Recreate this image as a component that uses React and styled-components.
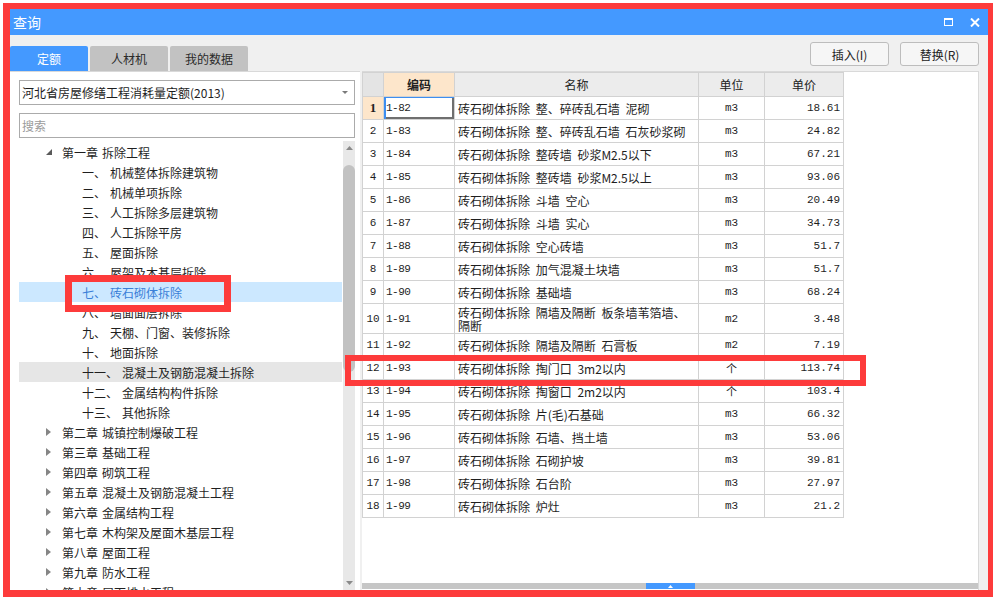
import React from 'react';
import styled, { createGlobalStyle } from 'styled-components';

const GlobalStyle = createGlobalStyle`
  html, body { margin: 0; padding: 0; background: #ffffff; overflow: hidden; }
  body { font-family: "Noto Sans CJK SC", "Noto Sans", sans-serif; }
  * { box-sizing: border-box; }
`;

const CJK = `"Noto Sans CJK SC", "Noto Sans", sans-serif`;
const MONO = `"Liberation Mono", "Noto Sans CJK SC", monospace`;

const Page = styled.div`
  position: relative;
  width: 993px;
  height: 598px;
  padding: 3px 0 0 3px;
  overflow: hidden;
`;

const Frame = styled.div`
  width: 992px;
  height: 594px;
  border: 7px solid #fd3b3b;
  border-top-width: 6px;
  display: flex;
  flex-direction: column;
  background: #f0f0f0;
`;

const TitleBar = styled.div`
  height: 26px;
  flex: none;
  background: #4499ff;
  display: flex;
  align-items: center;
  padding: 0 8px 0 3px;
  color: #ffffff;
  font-family: ${CJK};
  font-size: 14px;
  line-height: 16px;
`;

const TitleText = styled.span`
  margin-top: -1px;
`;

const WinControls = styled.div`
  margin-left: auto;
  display: flex;
  align-items: center;
  gap: 17px;
`;

const Toolbar = styled.div`
  height: 36px;
  flex: none;
  display: flex;
  justify-content: space-between;
  padding-right: 9px;
`;

const Tabs = styled.div`
  align-self: flex-end;
  display: flex;
  gap: 2px;
`;

const Tab = styled.div`
  width: 78px;
  height: 25px;
  display: flex;
  align-items: center;
  justify-content: center;
  border-radius: 2px 2px 0 0;
  font-family: ${CJK};
  font-size: 12px;
  background: ${p => (p.$active ? '#4499ff' : '#c2c2c2')};
  color: ${p => (p.$active ? '#ffffff' : '#2a2a2a')};
`;

const Buttons = styled.div`
  display: flex;
  gap: 11px;
  margin-top: 7px;
`;

const Button = styled.div`
  width: 79px;
  height: 24px;
  border: 1px solid #bdbdbd;
  border-radius: 3px;
  background: #f6f6f6;
  display: flex;
  align-items: center;
  justify-content: center;
  font-family: ${CJK};
  font-size: 12px;
  color: #222;
`;

const Content = styled.div`
  height: 519px;
  flex: none;
  display: flex;
  gap: 2px;
  padding-right: 9px;
`;

const LeftPanel = styled.div`
  width: 350px;
  flex: none;
  background: #ffffff;
  border-top: 1px solid #d9d9d9;
  padding: 8px 5px 0 9px;
  display: flex;
  flex-direction: column;
`;

const Select = styled.div`
  height: 25px;
  flex: none;
  border: 1px solid #ababab;
  padding: 0 6px 0 2px;
  display: flex;
  align-items: center;
  justify-content: space-between;
  font-family: ${CJK};
  font-size: 12px;
  color: #1e1e1e;
`;

const SearchBox = styled.div`
  height: 25px;
  flex: none;
  margin-top: 8px;
  border: 1px solid #ababab;
  padding-left: 2px;
  display: flex;
  align-items: center;
  font-family: ${CJK};
  font-size: 12px;
  color: #9b9b9b;
`;

const TreeWrap = styled.div`
  flex: 1;
  margin-top: 3px;
  display: flex;
  overflow: hidden;
`;

const TreeList = styled.div`
  flex: 1;
  padding-top: 1px;
  overflow: hidden;
`;

const TreeRow = styled.div`
  height: 20px;
  display: flex;
  align-items: center;
  white-space: nowrap;
  padding-left: ${p => (p.$level === 0 ? 27 : 63)}px;
  margin-right: 1px;
  font-family: ${CJK};
  font-size: 12px;
  color: ${p => (p.$selected ? '#3a7fd8' : '#1f1f1f')};
  background: ${p => (p.$selected ? '#cce8ff' : p.$hover ? '#e6e6e6' : 'transparent')};
`;

const Caret = styled.span`
  width: 16px;
  flex: none;
  display: flex;
  align-items: center;
`;

const Prefix = styled.span`
  margin-right: 4px;
`;

const ScrollBar = styled.div`
  width: 12px;
  flex: none;
  background: #e8e8e8;
  display: flex;
  flex-direction: column;
  align-items: center;
`;

const ScrollArrow = styled.div`
  height: 14px;
  width: 12px;
  flex: none;
  display: flex;
  align-items: center;
  justify-content: center;
`;

const Thumb = styled.div`
  width: 12px;
  height: 207px;
  margin-top: 10px;
  border-radius: 6px;
  background: #c2c2c2;
  flex: none;
`;

const Spacer = styled.div`
  flex: 1;
`;

const RightPanel = styled.div`
  flex: 1;
  background: #ffffff;
  border-top: 1px solid #d9d9d9;
  border-right: 1px solid #d9d9d9;
  display: flex;
  flex-direction: column;
`;

const TableArea = styled.div`
  flex: 1;
  overflow: hidden;
`;

const Table = styled.table`
  border-collapse: collapse;
  table-layout: fixed;
  width: 481px;
`;

const HeadCell = styled.th`
  height: 24px;
  padding: 0;
  border: 1px solid #d2d2d2;
  font-family: ${CJK};
  font-size: 12px;
  font-weight: ${p => (p.$hl ? 700 : 400)};
  color: #222;
  text-align: center;
  background: ${p => (p.$hl ? '#fde6cb' : p.$corner ? '#e4e4e4' : '#ececec')};
`;

const Row = styled.tr`
  height: ${p => (p.$tall ? 30 : 23)}px;
`;

const Cell = styled.td`
  padding: 0;
  border: 1px solid #d2d2d2;
  font-size: 12px;
  color: #1e1e1e;
  vertical-align: middle;
  white-space: nowrap;
  overflow: hidden;
`;

const NumCell = styled(Cell)`
  text-align: center;
  font-family: ${p => (p.$hl ? `"Liberation Serif", serif` : MONO)};
  font-size: ${p => (p.$hl ? 13 : 11)}px;
  font-weight: ${p => (p.$hl ? 700 : 400)};
  background: ${p => (p.$hl ? '#fde6cb' : '#ffffff')};
`;

const CodeCell = styled(Cell)`
  padding-left: 2px;
  font-family: ${MONO};
  font-size: 11px;
  letter-spacing: -0.5px;
  box-shadow: ${p => (p.$focus ? 'inset 2px 1px 0 0 #3d8ef0, inset -2px -2px 0 0 #6f6f6f' : 'none')};
`;

const NameCell = styled(Cell)`
  padding-left: 3px;
  font-family: ${CJK};
  word-spacing: 3px;
  line-height: 13px;
  white-space: pre;
`;

const UnitCell = styled(Cell)`
  text-align: center;
  font-family: ${MONO};
  font-size: 11px;
`;

const PriceCell = styled(Cell)`
  text-align: right;
  padding-right: 3px;
  font-family: ${MONO};
  font-size: 11px;
`;

const BottomBar = styled.div`
  height: 6px;
  flex: none;
  margin-bottom: 1px;
  background: #c6c6c6;
  display: flex;
  justify-content: center;
`;

const Handle = styled.div`
  width: 49px;
  height: 6px;
  background: #4499ff;
  display: flex;
  align-items: center;
  justify-content: center;
`;

const Mark = styled.div`
  position: absolute;
  left: ${p => p.$x}px;
  top: ${p => p.$y}px;
  width: ${p => p.$w}px;
  height: ${p => p.$h}px;
  border: ${p => p.$t}px solid #fd3b3b;
  pointer-events: none;
`;

const tree = [
  { level: 0, open: true, prefix: '第一章', text: '拆除工程' },
  { level: 1, prefix: '一、', text: '机械整体拆除建筑物' },
  { level: 1, prefix: '二、', text: '机械单项拆除' },
  { level: 1, prefix: '三、', text: '人工拆除多层建筑物' },
  { level: 1, prefix: '四、', text: '人工拆除平房' },
  { level: 1, prefix: '五、', text: '屋面拆除' },
  { level: 1, prefix: '六、', text: '屋架及木基层拆除' },
  { level: 1, prefix: '七、', text: '砖石砌体拆除', selected: true },
  { level: 1, prefix: '八、', text: '墙面面层拆除' },
  { level: 1, prefix: '九、', text: '天棚、门窗、装修拆除' },
  { level: 1, prefix: '十、', text: '地面拆除' },
  { level: 1, prefix: '十一、', text: '混凝土及钢筋混凝土拆除', hover: true },
  { level: 1, prefix: '十二、', text: '金属结构构件拆除' },
  { level: 1, prefix: '十三、', text: '其他拆除' },
  { level: 0, prefix: '第二章', text: '城镇控制爆破工程' },
  { level: 0, prefix: '第三章', text: '基础工程' },
  { level: 0, prefix: '第四章', text: '砌筑工程' },
  { level: 0, prefix: '第五章', text: '混凝土及钢筋混凝土工程' },
  { level: 0, prefix: '第六章', text: '金属结构工程' },
  { level: 0, prefix: '第七章', text: '木构架及屋面木基层工程' },
  { level: 0, prefix: '第八章', text: '屋面工程' },
  { level: 0, prefix: '第九章', text: '防水工程' },
  { level: 0, prefix: '第十章', text: '屋面排水工程' },
];

const rows = [
  ['1', '1-82', '砖石砌体拆除 整、碎砖乱石墙 泥砌', 'm3', '18.61'],
  ['2', '1-83', '砖石砌体拆除 整、碎砖乱石墙 石灰砂浆砌', 'm3', '24.82'],
  ['3', '1-84', '砖石砌体拆除 整砖墙 砂浆M2.5以下', 'm3', '67.21'],
  ['4', '1-85', '砖石砌体拆除 整砖墙 砂浆M2.5以上', 'm3', '93.06'],
  ['5', '1-86', '砖石砌体拆除 斗墙 空心', 'm3', '20.49'],
  ['6', '1-87', '砖石砌体拆除 斗墙 实心', 'm3', '34.73'],
  ['7', '1-88', '砖石砌体拆除 空心砖墙', 'm3', '51.7'],
  ['8', '1-89', '砖石砌体拆除 加气混凝土块墙', 'm3', '51.7'],
  ['9', '1-90', '砖石砌体拆除 基础墙', 'm3', '68.24'],
  ['10', '1-91', '砖石砌体拆除 隔墙及隔断 板条墙苇箔墙、\n隔断', 'm2', '3.48'],
  ['11', '1-92', '砖石砌体拆除 隔墙及隔断 石膏板', 'm2', '7.19'],
  ['12', '1-93', '砖石砌体拆除 掏门口 3m2以内', '个', '113.74'],
  ['13', '1-94', '砖石砌体拆除 掏窗口 2m2以内', '个', '103.4'],
  ['14', '1-95', '砖石砌体拆除 片(毛)石基础', 'm3', '66.32'],
  ['15', '1-96', '砖石砌体拆除 石墙、挡土墙', 'm3', '53.06'],
  ['16', '1-97', '砖石砌体拆除 石砌护坡', 'm3', '39.81'],
  ['17', '1-98', '砖石砌体拆除 石台阶', 'm3', '27.97'],
  ['18', '1-99', '砖石砌体拆除 炉灶', 'm3', '21.2'],
];

const MaxIcon = () => (
  <svg width="9" height="8" viewBox="0 0 9 8">
    <rect x="0.5" y="1" width="8" height="6.5" fill="none" stroke="#fff" strokeWidth="1" />
    <rect x="0" y="0" width="9" height="2" fill="#fff" />
  </svg>
);

const CloseIcon = () => (
  <svg width="10" height="9" viewBox="0 0 10 9">
    <path d="M1 0.5 L9 8.5 M9 0.5 L1 8.5" stroke="#fff" strokeWidth="2" />
  </svg>
);

const CaretIcon = ({ open }) =>
  open ? (
    <svg width="6" height="6" viewBox="0 0 6 6">
      <polygon points="6,0 6,6 0,6" fill="#5a5a5a" />
    </svg>
  ) : (
    <svg width="5" height="8" viewBox="0 0 5 8">
      <polygon points="0,0 5,4 0,8" fill="#858585" />
    </svg>
  );

const Tri = ({ dir, color = '#8a8a8a', w = 7, h = 4 }) => (
  <svg width={w} height={h} viewBox={`0 0 ${w} ${h}`}>
    <polygon points={dir === 'up' ? `0,${h} ${w / 2},0 ${w},${h}` : `0,0 ${w},0 ${w / 2},${h}`} fill={color} />
  </svg>
);

export default function App() {
  return (
    <Page>
      <GlobalStyle />
      <Frame>
        <TitleBar>
          <TitleText>查询</TitleText>
          <WinControls>
            <MaxIcon />
            <CloseIcon />
          </WinControls>
        </TitleBar>
        <Toolbar>
          <Tabs>
            <Tab $active>定额</Tab>
            <Tab>人材机</Tab>
            <Tab>我的数据</Tab>
          </Tabs>
          <Buttons>
            <Button>插入(I)</Button>
            <Button>替换(R)</Button>
          </Buttons>
        </Toolbar>
        <Content>
          <LeftPanel>
            <Select>
              <span>河北省房屋修缮工程消耗量定额(2013)</span>
              <Tri dir="down" color="#7a7a7a" w={6} h={3} />
            </Select>
            <SearchBox>搜索</SearchBox>
            <TreeWrap>
              <TreeList>
                {tree.map((t, i) => (
                  <TreeRow key={i} $level={t.level} $selected={t.selected} $hover={t.hover}>
                    {t.level === 0 && (
                      <Caret>
                        <CaretIcon open={t.open} />
                      </Caret>
                    )}
                    <Prefix>{t.prefix}</Prefix>
                    <span>{t.text}</span>
                  </TreeRow>
                ))}
              </TreeList>
              <ScrollBar>
                <ScrollArrow>
                  <Tri dir="up" />
                </ScrollArrow>
                <Thumb />
                <Spacer />
                <ScrollArrow>
                  <Tri dir="down" />
                </ScrollArrow>
              </ScrollBar>
            </TreeWrap>
          </LeftPanel>
          <RightPanel>
            <TableArea>
              <Table>
                <colgroup>
                  <col style={{ width: 21 }} />
                  <col style={{ width: 71 }} />
                  <col style={{ width: 244 }} />
                  <col style={{ width: 66 }} />
                  <col style={{ width: 79 }} />
                </colgroup>
                <thead>
                  <tr>
                    <HeadCell $corner></HeadCell>
                    <HeadCell $hl>编码</HeadCell>
                    <HeadCell>名称</HeadCell>
                    <HeadCell>单位</HeadCell>
                    <HeadCell>单价</HeadCell>
                  </tr>
                </thead>
                <tbody>
                  {rows.map((r, i) => (
                    <Row key={r[0]} $tall={r[2].includes('\n')}>
                      <NumCell $hl={i === 0}>{r[0]}</NumCell>
                      <CodeCell $focus={i === 0}>{r[1]}</CodeCell>
                      <NameCell>{r[2]}</NameCell>
                      <UnitCell>{r[3]}</UnitCell>
                      <PriceCell>{r[4]}</PriceCell>
                    </Row>
                  ))}
                </tbody>
              </Table>
            </TableArea>
            <BottomBar>
              <Handle>
                <Tri dir="up" color="#ffffff" w={5} h={3} />
              </Handle>
            </BottomBar>
          </RightPanel>
        </Content>
      </Frame>
      <Mark $x={65} $y={275} $w={166} $h={37} $t={7} />
      <Mark $x={345} $y={355} $w={521} $h={31} $t={6} />
    </Page>
  );
}
